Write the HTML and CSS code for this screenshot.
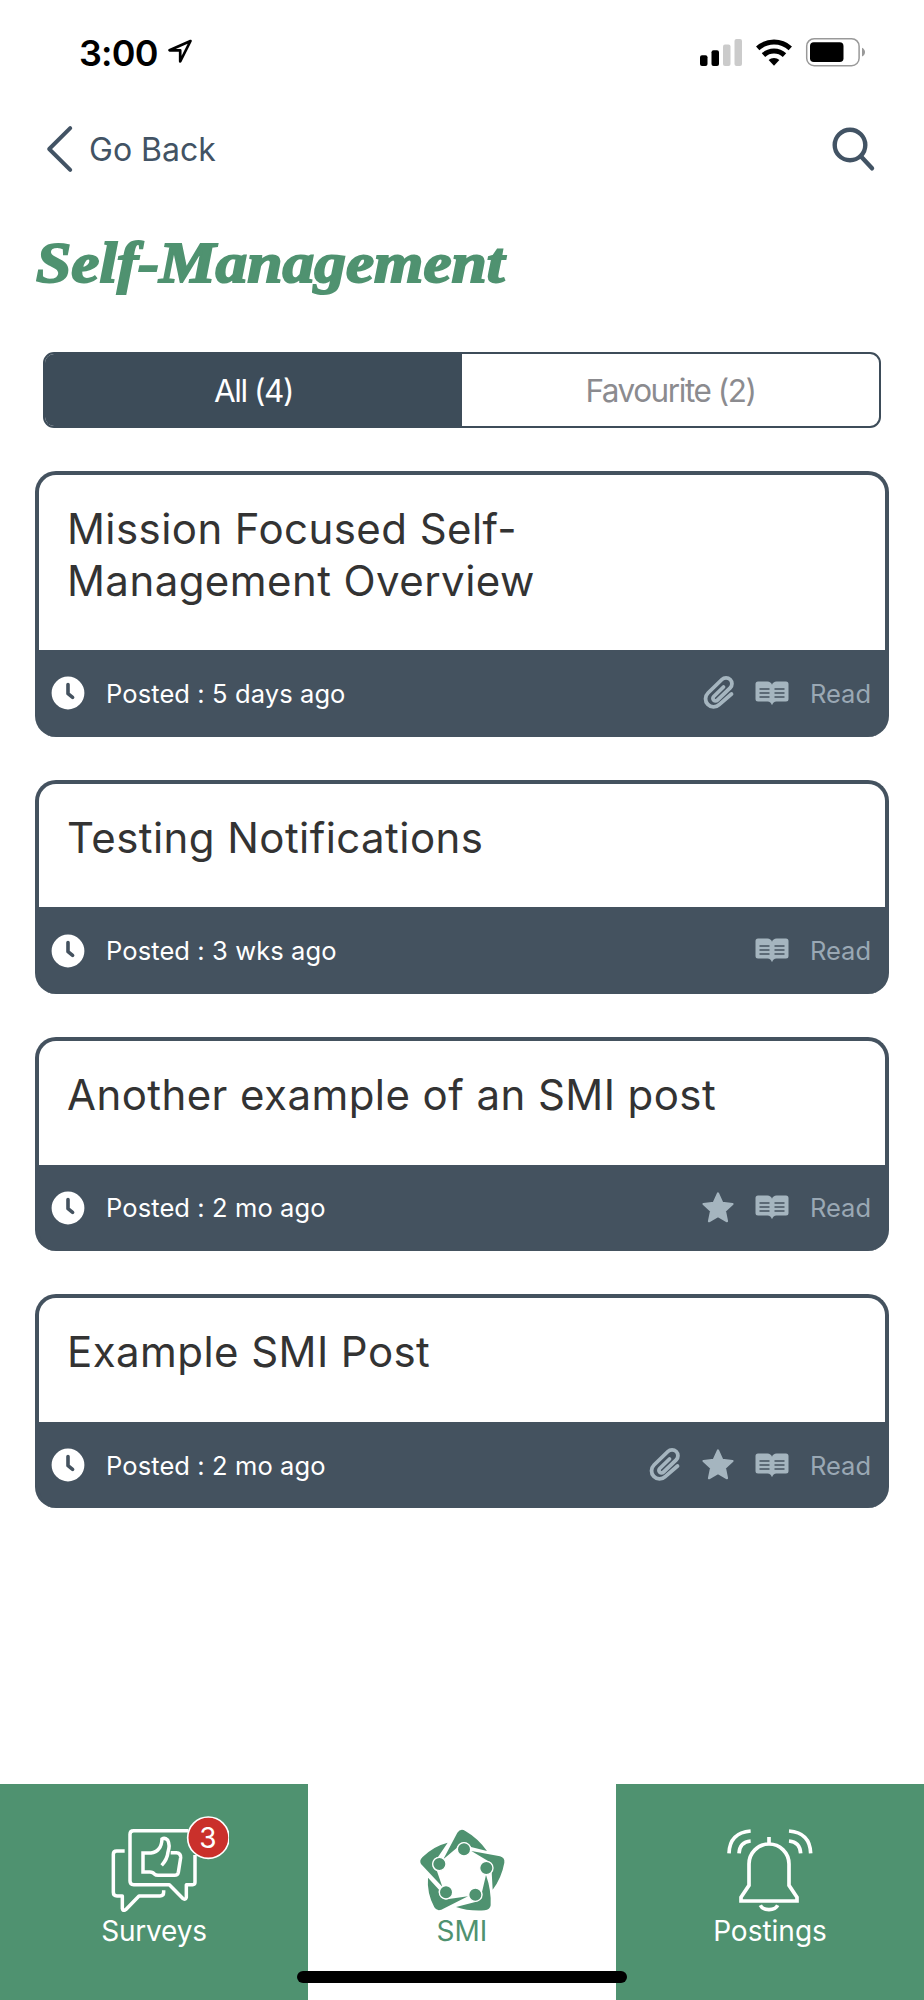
FILE: index.html
```html
<!DOCTYPE html>
<html lang="en">
<head>
<meta charset="utf-8">
<title>Self-Management</title>
<link rel="stylesheet" href="styles.css">
</head>
<body>
<svg class="defs" aria-hidden="true">
  <symbol id="clock" viewBox="0 0 34 34"><path d="M17 .6a16.4 16.4 0 1 0 0 32.800a16.400 16.400 0 0 0 0-32.800z"/><path class="hands" d="M17 8.500v9.200l4.600 3.600"/></symbol>
  <symbol id="clip" viewBox="0 0 32 36"><path class="line" d="M20.500 12L10.700 21.500a2.600 2.600 0 0 0 3.700 3.700L27.200 12.800a5.700 5.700 0 0 0-8.300-8.300L5 18a7.800 7.800 0 0 0 11.200 11.600L28.500 19"/></symbol>
  <symbol id="book" viewBox="0 0 34 25"><path d="M3 .6h9.500c2.300 0 3.700 1.300 4.500 3.100C17.800 1.900 19.200.6 21.500.6H31a2.500 2.500 0 0 1 2.500 2.500v14.800a2.500 2.500 0 0 1-2.500 2.500h-9.500c-2.300 0-3.700 1.600-4.500 3.900c-.8-2.300-2.200-3.900-4.500-3.900H3a2.500 2.500 0 0 1-2.500-2.500V3.100A2.500 2.500 0 0 1 3 .6z"/><path class="rows" d="M4.500 8h10M4.500 12h10M4.500 16h10M19.500 8h10M19.500 12h10M19.500 16h10"/></symbol>
  <symbol id="star" viewBox="0 0 34 34"><path d="M17 2.500l4.200 9.300 10.300 1.200-7.600 7 2.100 10.200-9-5.100-9 5.100 2.100-10.200-7.600-7 10.300-1.200z" stroke="currentColor" stroke-width="2.200" stroke-linejoin="round"/></symbol>
</svg>
<div class="screen">
  <header class="status">
    <div class="time">3:00
      <svg width="26" height="28" viewBox="0 0 26 28"><path d="M23.500 3L2.500 12.300h10.700V23.500z" fill="none" stroke="#000" stroke-width="2.700" stroke-linejoin="round"/></svg>
    </div>
    <svg class="signals" width="168" height="32" viewBox="698 36 168 32">
      <rect x="700" y="55.300" width="7.500" height="10.700" rx="2"/><rect x="711.500" y="50.300" width="7.500" height="15.700" rx="2"/>
      <g fill="#cbcbcb"><rect x="723" y="44.600" width="7.500" height="21.400" rx="2"/><rect x="734.500" y="39" width="7.500" height="27" rx="2"/></g>
      <path d="M774 65.700l-5.400-5.600a8 8 0 0 1 10.800 0z"/>
      <g fill="none" stroke="#000" stroke-width="5"><path d="M763.500 55.200a15.500 15.500 0 0 1 21 0"/><path d="M757.700 48.300a24.500 24.500 0 0 1 32.600 0"/></g>
      <rect x="806.700" y="38.700" width="52.400" height="27" rx="7.500" fill="none" stroke="#999" stroke-width="1.500"/>
      <rect x="810" y="42.300" width="33.500" height="19.700" rx="3.800"/><path d="M862 47.800c4 1.800 4 7 0 8.800z" fill="#999"/>
    </svg>
  </header>
  <nav class="nav">
    <a class="back"><svg width="28" height="50" viewBox="0 0 28 50"><path d="M24.200 4.200L3.200 25L24.200 45.800" fill="none" stroke="currentColor" stroke-width="4" stroke-linecap="round" stroke-linejoin="round"/></svg><span>Go Back</span></a>
    <svg width="46" height="46" viewBox="830 126 46 46" fill="none" stroke="currentColor" stroke-linecap="round"><circle cx="850" cy="145" r="15.300" stroke-width="4.400"/><path d="M861.500 157L872 168.300" stroke-width="4.400"/></svg>
  </nav>
  <h1>Self-Management</h1>
  <div class="tabs"><div class="tab on">All (4)</div><div class="tab">Favourite (2)</div></div>
  <main class="posts">
    <article class="card">
      <h2>Mission Focused Self-<br>Management Overview</h2>
      <footer><svg class="clock"><use href="#clock"/></svg><span class="posted">Posted : 5 days ago</span><svg class="clip"><use href="#clip"/></svg><svg class="book"><use href="#book"/></svg><span class="read">Read</span></footer>
    </article>
    <article class="card">
      <h2>Testing Notifications</h2>
      <footer><svg class="clock"><use href="#clock"/></svg><span class="posted">Posted : 3 wks ago</span><svg class="book"><use href="#book"/></svg><span class="read">Read</span></footer>
    </article>
    <article class="card">
      <h2>Another example of an SMI post</h2>
      <footer><svg class="clock"><use href="#clock"/></svg><span class="posted">Posted : 2 mo ago</span><svg class="star"><use href="#star"/></svg><svg class="book"><use href="#book"/></svg><span class="read">Read</span></footer>
    </article>
    <article class="card">
      <h2>Example SMI Post</h2>
      <footer><svg class="clock"><use href="#clock"/></svg><span class="posted">Posted : 2 mo ago</span><svg class="clip"><use href="#clip"/></svg><svg class="star"><use href="#star"/></svg><svg class="book"><use href="#book"/></svg><span class="read">Read</span></footer>
    </article>
  </main>
  <div class="bar">
    <a class="item">
      <svg width="150" height="102" viewBox="-3 90 450 306" fill="none" stroke="#fff" stroke-width="10.500" stroke-linejoin="round">
        <path d="M345 225v82q0 7-7 7h-19v38q-3 9-11 3l-40-41H161q-11 0-11-11V163q0-11 11-11H325"/>
        <path d="M134 213h-24q-10 0-10 10v114q0 11 11 11h16v38q2 9 10 3l40-41h63q11 0 11-11v-6"/>
        <path stroke-linejoin="miter" d="M245 256q17-18 19-40q7-20-1-36q-9-8-17-3q-1 20-9 29q-9 12-24 13h-24v57h21q9 0 14 7q3 3 10 3h50q9 0 11-9l7-44q1-14-13-15h-17"/>
        <circle cx="385" cy="173" r="62" fill="#ca302b" stroke-width="5"/>
      </svg>
      <b class="badge">3</b><span class="surveys">Surveys</span>
    </a>
    <a class="item active">
      <svg width="150" height="102" viewBox="21 90 450 306" fill="currentColor">
        <path d="M190 238L232 158q10-14 24-5q38 22 65 60L273 201a23 23 0 0 0-43 3z"/>
        <path d="M274 213L360 229q15 4 13 19q-8 45-35 81L335 276a23 23 0 0 0-12-34z"/>
        <path d="M318 285q16 45 14 91q-2 14-18 15q-49 3-86-10L286 366a23 23 0 0 0 20-30z"/>
        <path d="M264 349L184 389q-14 5-21-7q-23-44-19-89L177 329a23 23 0 0 0 24 29z"/>
        <path d="M187 320L123 252q-6-10 4-20q32-33 76-44L174 231a23 23 0 0 0-3 43z"/>
        <g stroke="#fff" stroke-width="4"><circle cx="252" cy="208" r="20"/><circle cx="319" cy="264" r="20"/><circle cx="286" cy="344" r="20"/><circle cx="198" cy="337" r="20"/><circle cx="178" cy="252" r="20"/></g>
      </svg>
      <span>SMI</span>
    </a>
    <a class="item">
      <svg width="150" height="102" viewBox="15 90 450 306" fill="none" stroke="#fff" stroke-width="11">
        <path d="M177 316V252a60 60 0 0 1 120 0V316L321 352V363H153V352zM237 193V171M211 376c8 17 44 17 52 0M117 220q2-62 65-67M147 220q2-34 35-37M362 220q-2-62-65-67M332 220q-2-34-35-37"/>
      </svg>
      <span>Postings</span>
    </a>
    <i class="home"></i>
  </div>
</div>
</body>
</html>
```
FILE: styles.css
```css
* { box-sizing: border-box; }
body { margin: 0; background: #fff; font-family: Inter, "Liberation Sans", sans-serif; font-weight: 400; }
svg { display: block; flex: none; }
.defs { position: absolute; width: 0; height: 0; }
.screen { width: 924px; height: 2000px; display: flex; flex-direction: column; overflow: hidden; }

.status { height: 104px; padding: 36px 58px 0 79px; display: flex; justify-content: space-between; align-items: flex-start; }
.time { display: flex; gap: 9px; font-size: 36px; line-height: 34px; font-weight: 600; letter-spacing: -0.8px; color: #000; }
.time svg { margin-top: 2px; }

.nav { height: 90px; padding: 0 48px 0 46px; display: flex; justify-content: space-between; align-items: center; color: #425364; }
.back { display: flex; align-items: center; gap: 15px; font-size: 32px; }

h1 { margin: 34px 0 0 36px; width: 600px; height: 124px; font: italic bold 58px/70px "Liberation Serif", serif; color: #4f9270; -webkit-text-stroke: 2px #4f9270; transform: scaleX(1.093); transform-origin: 0 0; }

.tabs { margin: 0 43px; height: 76px; display: flex; border: 2px solid #3d4c59; border-radius: 11px; overflow: hidden; flex: none; }
.tab { flex: 1; display: flex; align-items: center; justify-content: center; font-size: 31.500px; color: #8b8b8f; letter-spacing: -1.450px; }
.tab.on { background: #3d4c59; color: #fff; }

.posts { padding: 43px 35px 0; display: flex; flex-direction: column; gap: 43px; }
.card { border: 4px solid #44525f; border-bottom: 0; border-radius: 21px; background: #44525f; }
.card h2 { margin: 0; padding: 28px 28px 44px; background: #fff; border-radius: 17px 17px 0 0; font-size: 42px; line-height: 51.600px; font-weight: 400; letter-spacing: 0.430px; color: #333; }
.card footer { height: 86.600px; padding: 0 14px 0 12px; display: flex; align-items: center; color: #fff; font-size: 25.500px; }
.clock { width: 34px; height: 34px; fill: #fff; }
.hands { fill: none; stroke: #44525f; stroke-width: 3.600; stroke-linecap: round; stroke-linejoin: round; }
.posted { margin-left: 21px; margin-right: auto; letter-spacing: 0.100px; }
.read { margin-left: 21px; color: #9aa8b4; }
.clip, .star, .book { fill: #a5b5bf; color: #a5b5bf; }
.clip { width: 32px; height: 36px; margin-right: 20px; }
.line { fill: none; stroke: #a5b5bf; stroke-width: 3.800; stroke-linecap: round; stroke-linejoin: round; }
.star { width: 34px; height: 34px; margin-right: 20px; }
.book { width: 34px; height: 25px; }
.rows { fill: none; stroke: #44525f; stroke-width: 1.500; }

.bar { position: relative; margin-top: auto; height: 216px; display: grid; grid-template-columns: repeat(3, 1fr); flex: none; }
.item { position: relative; background: #4f9270; color: #fff; padding-top: 26px; display: flex; flex-direction: column; align-items: center; font-size: 28px; }
.item span { line-height: 38px; }
.item .surveys { letter-spacing: -0.200px; }
.item.active { background: #fff; color: #4f9270; }
.badge { position: absolute; left: 187px; top: 34px; width: 42px; text-align: center; line-height: 40px; font-weight: 400; font-size: 28px; }
.home { position: absolute; left: 297px; bottom: 17px; width: 330px; height: 12px; border-radius: 6px; background: #000; }
```
